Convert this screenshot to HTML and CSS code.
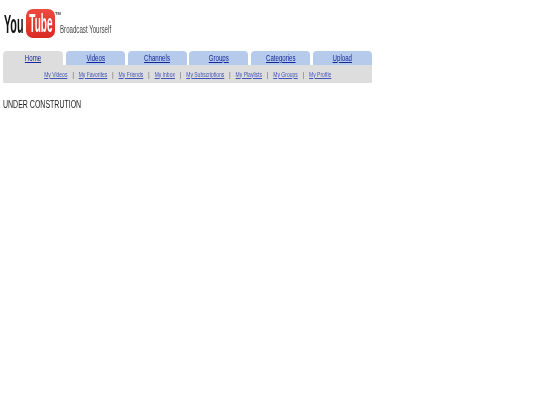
FILE: index.html
```html
<!DOCTYPE html>
<html lang="en">
<head>
  <meta charset="UTF-8" />
  <title>YouTube - Broadcast Yourself</title>
  <link rel="stylesheet" href="styles.css">
</head>
<body>
  <div class="logo">
    <span class="logo-you"><span class="logo-you-text">You</span></span>
    <span class="logo-tube"><span class="logo-tube-text">Tube</span></span>
    <span class="logo-tm">TM</span>
    <span class="logo-slogan"><span class="logo-slogan-text">Broadcast Yourself</span></span>
  </div>

  <div class="nav">
    <ul class="tabs">
      <li class="tab active"><a href="#">Home</a></li>
      <li class="tab"><a href="#">Videos</a></li>
      <li class="tab"><a href="#">Channels</a></li>
      <li class="tab"><a href="#">Groups</a></li>
      <li class="tab"><a href="#">Categories</a></li>
      <li class="tab"><a href="#">Upload</a></li>
    </ul>
    <div class="subnav">
      <div class="subnav-links">
        <a href="#">My Videos</a><span class="sep">|</span>
        <a href="#">My Favorites</a><span class="sep">|</span>
        <a href="#">My Friends</a><span class="sep">|</span>
        <a href="#">My Inbox</a><span class="sep">|</span>
        <a href="#">My Subscriptions</a><span class="sep">|</span>
        <a href="#">My Playlists</a><span class="sep">|</span>
        <a href="#">My Groups</a><span class="sep">|</span>
        <a href="#">My Profile</a>
      </div>
    </div>
  </div>

  <p class="notice">UNDER CONSTRUTION</p>
</body>
</html>
```

FILE: styles.css
```css
html {
  background: #ffffff;
}
body {
  font-family: 'Liberation Sans', Arial, sans-serif;
  color: #222222;
  background: #ffffff;
  margin: 0;
  padding: 9px 0 0 3px;
  filter: blur(0.45px);
}
.logo {
  display: flex;
  align-items: flex-start;
  height: 42px;
}
.logo-you {
  width: 22px;
  height: 30px;
  padding-left: 1px;
  flex-shrink: 0;
}
.logo-you-text {
  display: inline-block;
  font-size: 25px;
  font-weight: 700;
  line-height: 30px;
  color: #111111;
  transform: scaleX(0.43);
  transform-origin: left center;
}
.logo-tube {
  width: 29px;
  height: 29px;
  background: linear-gradient(#ee4a40, #d92a22);
  border-radius: 7px;
  display: flex;
  justify-content: center;
  overflow: hidden;
}
.logo-tube-text {
  flex-shrink: 0;
  font-size: 25px;
  font-weight: 700;
  line-height: 29px;
  color: #ffffff;
  transform: scaleX(0.4);
}
.logo-tm {
  font-size: 4px;
  font-weight: 700;
  line-height: 6px;
  margin-top: 2px;
  width: 5px;
  color: #333333;
}
.logo-slogan {
  margin-top: 14px;
  width: 52px;
}
.logo-slogan-text {
  display: block;
  font-size: 11px;
  line-height: 12px;
  white-space: nowrap;
  color: #444444;
  transform: scaleX(0.557);
  transform-origin: left center;
}
.nav {
  width: 369px;
}
.tabs {
  display: flex;
  justify-content: space-between;
  list-style: none;
  margin: 0;
  padding: 0;
}
.tab {
  width: 59px;
  height: 14px;
  background: #b6caeb;
  border-radius: 4px 4px 0 0;
  text-align: center;
  font-size: 9px;
  line-height: 15px;
}
.tab a {
  display: inline-block;
  color: #14269a;
  transform: scaleX(0.68);
}
.tab.active {
  width: 60px;
  background: #dddddd;
}
.subnav {
  height: 18px;
  background: #dddddd;
  display: flex;
  justify-content: center;
  align-items: center;
  overflow: hidden;
}
.subnav-links {
  flex-shrink: 0;
  display: flex;
  align-items: center;
  font-size: 8px;
  color: #444444;
  transform: scaleX(0.625);
}
.subnav a {
  color: #4054b8;
  white-space: nowrap;
}
.sep {
  margin: 0 8px;
}
.notice {
  margin: 16px 0 0;
  font-size: 10px;
  line-height: 12px;
  color: #222222;
  transform: scaleX(0.7);
  transform-origin: left center;
}
```
